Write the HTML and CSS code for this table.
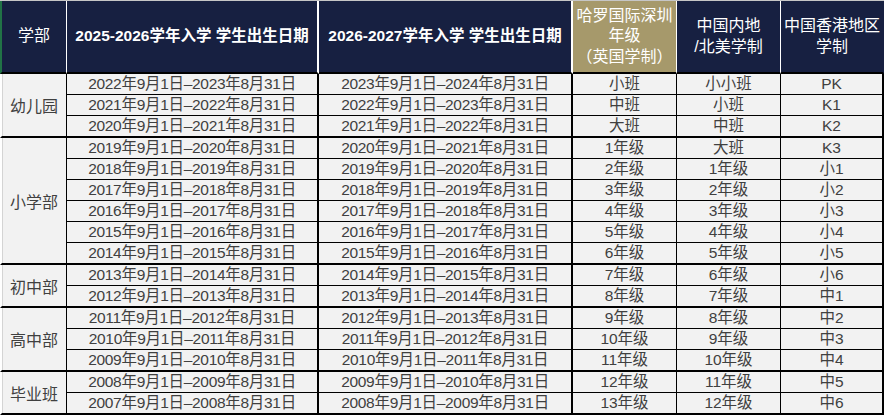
FILE: index.html
```html
<!DOCTYPE html>
<html lang="zh-CN">
<head>
<meta charset="utf-8">
<title>学部年级对照表</title>
<link rel="stylesheet" href="styles.css">
</head>
<body>
<div class="sheet">
  <div class="h h1 first">学部</div>
  <div class="h h2 bold">2025-2026学年入学 学生出生日期</div>
  <div class="h h3 bold">2026-2027学年入学 学生出生日期</div>
  <div class="h h4 gold">哈罗国际深圳<br>年级<br>（英国学制）</div>
  <div class="h h5">中国内地<br>/北美学制</div>
  <div class="h h6">中国香港地区<br>学制</div>

  <div class="grp span3">幼儿园</div>
  <div class="c c2">2022年9月1日–2023年8月31日</div><div class="c c3">2023年9月1日–2024年8月31日</div><div class="c c4">小班</div><div class="c c5">小小班</div><div class="c c6">PK</div>
  <div class="c c2">2021年9月1日–2022年8月31日</div><div class="c c3">2022年9月1日–2023年8月31日</div><div class="c c4">中班</div><div class="c c5">小班</div><div class="c c6">K1</div>
  <div class="c c2 end">2020年9月1日–2021年8月31日</div><div class="c c3 end">2021年9月1日–2022年8月31日</div><div class="c c4 end">大班</div><div class="c c5 end">中班</div><div class="c c6 end">K2</div>

  <div class="grp span6">小学部</div>
  <div class="c c2">2019年9月1日–2020年8月31日</div><div class="c c3">2020年9月1日–2021年8月31日</div><div class="c c4">1年级</div><div class="c c5">大班</div><div class="c c6">K3</div>
  <div class="c c2">2018年9月1日–2019年8月31日</div><div class="c c3">2019年9月1日–2020年8月31日</div><div class="c c4">2年级</div><div class="c c5">1年级</div><div class="c c6">小1</div>
  <div class="c c2">2017年9月1日–2018年8月31日</div><div class="c c3">2018年9月1日–2019年8月31日</div><div class="c c4">3年级</div><div class="c c5">2年级</div><div class="c c6">小2</div>
  <div class="c c2">2016年9月1日–2017年8月31日</div><div class="c c3">2017年9月1日–2018年8月31日</div><div class="c c4">4年级</div><div class="c c5">3年级</div><div class="c c6">小3</div>
  <div class="c c2">2015年9月1日–2016年8月31日</div><div class="c c3">2016年9月1日–2017年8月31日</div><div class="c c4">5年级</div><div class="c c5">4年级</div><div class="c c6">小4</div>
  <div class="c c2 end">2014年9月1日–2015年8月31日</div><div class="c c3 end">2015年9月1日–2016年8月31日</div><div class="c c4 end">6年级</div><div class="c c5 end">5年级</div><div class="c c6 end">小5</div>

  <div class="grp span2">初中部</div>
  <div class="c c2">2013年9月1日–2014年8月31日</div><div class="c c3">2014年9月1日–2015年8月31日</div><div class="c c4">7年级</div><div class="c c5">6年级</div><div class="c c6">小6</div>
  <div class="c c2 end">2012年9月1日–2013年8月31日</div><div class="c c3 end">2013年9月1日–2014年8月31日</div><div class="c c4 end">8年级</div><div class="c c5 end">7年级</div><div class="c c6 end">中1</div>

  <div class="grp span3">高中部</div>
  <div class="c c2">2011年9月1日–2012年8月31日</div><div class="c c3">2012年9月1日–2013年8月31日</div><div class="c c4">9年级</div><div class="c c5">8年级</div><div class="c c6">中2</div>
  <div class="c c2">2010年9月1日–2011年8月31日</div><div class="c c3">2011年9月1日–2012年8月31日</div><div class="c c4">10年级</div><div class="c c5">9年级</div><div class="c c6">中3</div>
  <div class="c c2 end">2009年9月1日–2010年8月31日</div><div class="c c3 end">2010年9月1日–2011年8月31日</div><div class="c c4 end">11年级</div><div class="c c5 end">10年级</div><div class="c c6 end">中4</div>

  <div class="grp span2">毕业班</div>
  <div class="c c2">2008年9月1日–2009年8月31日</div><div class="c c3">2009年9月1日–2010年8月31日</div><div class="c c4">12年级</div><div class="c c5">11年级</div><div class="c c6">中5</div>
  <div class="c c2 end">2007年9月1日–2008年8月31日</div><div class="c c3 end">2008年9月1日–2009年8月31日</div><div class="c c4 end">13年级</div><div class="c c5 end">12年级</div><div class="c c6 end">中6</div>
</div>
</body>
</html>
```

FILE: styles.css
```css
* { box-sizing: border-box; }
html, body { margin: 0; padding: 0; background: #ffffff; }
body {
  width: 886px;
  height: 416px;
  overflow: hidden;
  font-family: "Liberation Sans", "Noto Sans CJK SC", sans-serif;
}
.sheet {
  display: grid;
  grid-template-columns: 67px 252px 254px 104px 104px 103px;
  border-top: 1px solid #c6c6c6;
  width: 884px;
}
.h {
  height: 73px;
  background: #172041;
  color: #ffffff;
  border-bottom: 2px solid #000000;
  border-right: 1px solid #ffffff;
  display: flex;
  align-items: center;
  justify-content: center;
  text-align: center;
  font-size: 16px;
  line-height: 20.5px;
}
.h.first { border-left: 2px solid #217346; }
.h.h2, .h.h3 { border-right: 2px solid #ffffff; }
.h.h6 { border-right: 1px solid #172041; }
.h.bold { font-weight: bold; font-size: 15.5px; }
.h.gold { background: #a6996b; }

.grp {
  background: #f2f2f2;
  color: #404040;
  border-left: 2px solid #ffffff;
  box-shadow: inset 1px 0 0 #d4d4d4;
  border-right: 1px solid #000000;
  border-bottom: 2px solid #000000;
  display: flex;
  align-items: center;
  justify-content: center;
  font-size: 16px;
}
.span2 { grid-row: span 2; }
.span3 { grid-row: span 3; }
.span6 { grid-row: span 6; }

.c {
  background: #f2f2f2;
  color: #404040;
  height: 21px;
  line-height: 20px;
  text-align: center;
  font-size: 15.5px;
  letter-spacing: -0.3px;
  white-space: nowrap;
  border-bottom: 1px solid #000000;
}
.c.end { height: 22px; border-bottom: 2px solid #000000; }
.c2, .c3, .c6 { border-right: 2px solid #000000; }
.c4, .c5 { border-right: 1px solid #000000; }
.c4, .c5, .c6 { letter-spacing: 0; font-size: 15.5px; }
```
